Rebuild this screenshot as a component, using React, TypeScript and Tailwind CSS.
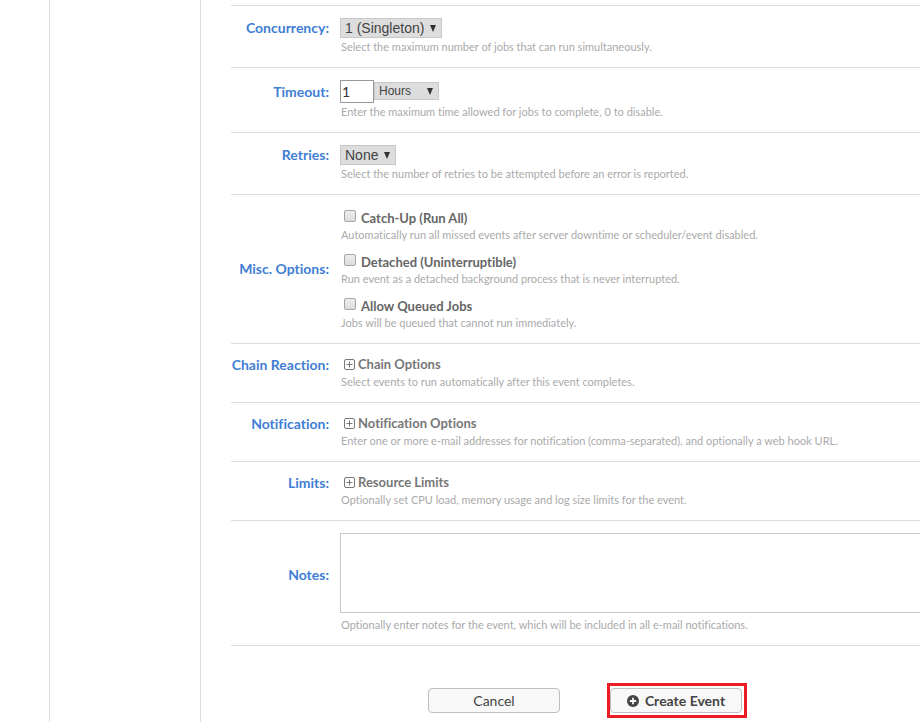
import { useId, useState, type ReactNode } from "react";

const captionClass = "pl-px text-[11px] leading-[17px] text-[#aaaaaa]";

function FormRow({ label, htmlFor, caption, children }: {
  label: string;
  htmlFor?: string;
  caption?: string;
  children: ReactNode;
}) {
  const labelClass = "text-right text-sm leading-4 font-bold whitespace-nowrap text-[#3f7ed5]";
  return (
    <div className="grid grid-cols-[98px_minmax(0,1fr)] items-center gap-x-[11px] border-b border-[#dddddd] py-3">
      {htmlFor ? (
        <label htmlFor={htmlFor} className={labelClass}>{label}</label>
      ) : (
        <span className={labelClass}>{label}</span>
      )}
      <div>{children}</div>
      {caption && <p className={`col-start-2 ${captionClass}`}>{caption}</p>}
    </div>
  );
}

function Select({ id, label, options, className }: {
  id?: string;
  label?: string;
  options: string[];
  className: string;
}) {
  return (
    <div className="relative flex w-fit">
      <select
        id={id}
        aria-label={label}
        className={`appearance-none border border-[#c8c8c8] bg-[#dddddd] pl-1 font-['Liberation_Sans',Arial,sans-serif] text-[#444444] ${className}`}
      >
        {options.map((option) => <option key={option}>{option}</option>)}
      </select>
      <svg viewBox="0 0 6 7" className="pointer-events-none absolute inset-y-0 right-[6px] my-auto h-[7px] w-[6px] fill-[#333333]" aria-hidden="true">
        <path d="M0 0h6L3 7z" />
      </svg>
    </div>
  );
}

function CheckOption({ label, caption }: { label: string; caption: string }) {
  const id = useId();
  return (
    <div>
      <div className="flex h-[19px] gap-[5px] pl-1">
        <input
          id={id}
          type="checkbox"
          className="mt-[3px] size-3 shrink-0 appearance-none rounded-[2px] border border-[#a6a6a6] bg-linear-to-b from-[#eeeeee] to-[#dcdcdc] checked:bg-[#3f7ed5]"
        />
        <label htmlFor={id} className="pt-[3px] text-[13px] leading-[17px] font-bold text-[#666666]">{label}</label>
      </div>
      <p className={captionClass}>{caption}</p>
    </div>
  );
}

function Expander({ children }: { children: ReactNode }) {
  const [open, setOpen] = useState(false);
  return (
    <button
      type="button"
      aria-expanded={open}
      onClick={() => setOpen(!open)}
      className="flex h-[17px] items-center gap-[3px] pl-1 text-[13px] leading-[17px] font-bold text-[#777777]"
    >
      <svg viewBox="0 0 11 11" className="size-[11px]" fill="none" stroke="currentColor" aria-hidden="true">
        <rect x="0.5" y="0.5" width="10" height="10" rx="1.5" />
        <path d={open ? "M2.5 5.5h6" : "M2.5 5.5h6M5.5 2.5v6"} />
      </svg>
      {children}
    </button>
  );
}

const buttonClass =
  "flex h-[25px] w-[132px] items-center justify-center rounded-[4px] border border-[#bfbfbf] bg-[#f8f8f8] text-sm leading-4 text-[#444444]";

export default function App() {
  return (
    <div className="flex min-h-screen bg-white font-[Lato,sans-serif] [font-variant-ligatures:none]">
      <div className="w-[50px] shrink-0 border-r border-[#dddddd]" />
      <div className="w-[151px] shrink-0 border-r border-[#dddddd]" />
      <main className="min-w-0 flex-1 pt-[5px] pr-px pl-[30px]">
        <form onSubmit={(event) => event.preventDefault()}>
          <div className="border-t border-[#dddddd]">
            <FormRow label="Concurrency:" htmlFor="concurrency" caption="Select the maximum number of jobs that can run simultaneously.">
              <Select id="concurrency" options={["1 (Singleton)", "2", "3", "4"]} className="h-5 w-[102px] text-sm leading-4" />
            </FormRow>
            <FormRow label="Timeout:" htmlFor="timeout" caption="Enter the maximum time allowed for jobs to complete, 0 to disable.">
              <div className="flex h-[23px] items-center">
                <input id="timeout" type="text" defaultValue="1" className="h-[23px] w-[34px] border border-[#999999] bg-white px-px text-sm leading-4 text-[#333333]" />
                <div className="pb-px">
                  <Select label="Timeout units" options={["Hours", "Minutes", "Seconds"]} className="h-[18px] w-[65px] text-xs leading-4" />
                </div>
              </div>
            </FormRow>
            <FormRow label="Retries:" htmlFor="retries" caption="Select the number of retries to be attempted before an error is reported.">
              <Select id="retries" options={["None", "1", "2", "3"]} className="h-5 w-14 text-sm leading-4" />
            </FormRow>
            <FormRow label="Misc. Options:">
              <div className="flex flex-col gap-2">
                <CheckOption label="Catch-Up (Run All)" caption="Automatically run all missed events after server downtime or scheduler/event disabled." />
                <CheckOption label="Detached (Uninterruptible)" caption="Run event as a detached background process that is never interrupted." />
                <CheckOption label="Allow Queued Jobs" caption="Jobs will be queued that cannot run immediately." />
              </div>
            </FormRow>
            <FormRow label="Chain Reaction:" caption="Select events to run automatically after this event completes.">
              <Expander>Chain Options</Expander>
            </FormRow>
            <FormRow label="Notification:" caption="Enter one or more e-mail addresses for notification (comma-separated), and optionally a web hook URL.">
              <Expander>Notification Options</Expander>
            </FormRow>
            <FormRow label="Limits:" caption="Optionally set CPU load, memory usage and log size limits for the event.">
              <Expander>Resource Limits</Expander>
            </FormRow>
            <FormRow label="Notes:" htmlFor="notes" caption="Optionally enter notes for the event, which will be included in all e-mail notifications.">
              <div className="pb-[3px]">
                <textarea id="notes" className="block h-20 w-full resize-none border border-r-0 border-[#c8c8c8] bg-white p-1 text-sm" />
              </div>
            </FormRow>
          </div>
          <div className="flex items-center justify-center gap-[47px] pt-[37px] pl-6">
            <button type="button" className={buttonClass}>Cancel</button>
            <div className="border-3 border-[#ed1c24] py-[2px] pr-[2px]">
              <button type="submit" className={`${buttonClass} gap-[6px] font-bold`}>
                <svg viewBox="0 0 12 12" className="size-3" aria-hidden="true">
                  <circle cx="6" cy="6" r="6" fill="currentColor" />
                  <path d="M6 2.8v6.4M2.8 6h6.4" stroke="#f8f8f8" strokeWidth="1.8" />
                </svg>
                Create Event
              </button>
            </div>
          </div>
        </form>
      </main>
    </div>
  );
}
